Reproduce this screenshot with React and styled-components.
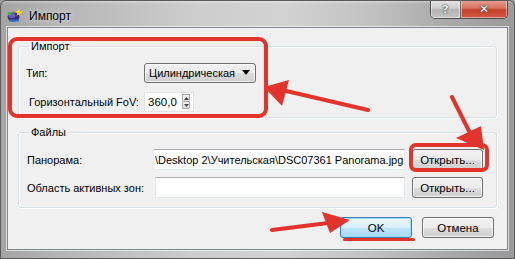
import React from "react";
import styled, { createGlobalStyle } from "styled-components";

const Global = createGlobalStyle`
  html, body { margin: 0; padding: 0; background: #9c9c9c; }
  body { font-family: "Liberation Sans", Arial, sans-serif; }
  * { box-sizing: border-box; }
`;

const Window = styled.div`
  position: relative;
  width: 515px;
  height: 259px;
  display: flex;
  flex-direction: column;
  background:
    linear-gradient(180deg, rgba(255,255,255,0.35) 0px, rgba(255,255,255,0) 3px),
    linear-gradient(90deg, #a4a4a4 0%, #b6b6b6 12%, #cdcdcd 38%, #d2d2d2 55%, #c2c2c2 72%, #a8a8a8 88%, #9a9a9a 100%);
  border: 1px solid #5a5a5a;
  border-radius: 6px 6px 0 0;
  overflow: hidden;
`;

const TitleBar = styled.div`
  height: 26px;
  display: flex;
  align-items: flex-start;
  flex-shrink: 0;
`;

const AppIcon = styled.svg`
  width: 16px;
  height: 16px;
  margin: 6px 0 0 6px;
`;

const Title = styled.div`
  font-size: 12px;
  color: #000;
  margin: 8px 0 0 6px;
  flex: 1;
  text-shadow: 0 0 6px rgba(255,255,255,0.9);
`;

const Caption = styled.div`
  display: flex;
  margin-right: 6px;
  margin-top: -1px;
  border: 1px solid #4f4f4f;
  border-top: none;
  border-radius: 0 0 5px 5px;
  overflow: hidden;
  height: 19px;
`;

const CapButton = styled.div`
  width: ${p => p.$w}px;
  height: 100%;
  display: flex;
  align-items: center;
  justify-content: center;
  font-family: "DejaVu Sans", sans-serif;
  font-weight: bold;
  font-size: ${p => p.$close ? 12 : 11}px;
  color: #fff;
  text-shadow: 0 0 2px #333, 0 0 1px #333;
  background: ${p => p.$close
    ? "linear-gradient(180deg, #e8a397 0%, #d8705e 45%, #c7402a 55%, #d15a45 100%)"
    : "linear-gradient(180deg, #e6e6e6 0%, #cdcdcd 45%, #b3b3b3 55%, #c4c4c4 100%)"};
  border-left: ${p => p.$close ? "1px solid #6a6a6a" : "none"};
  box-shadow: inset 0 0 0 1px rgba(255,255,255,0.45);
`;

const Client = styled.div`
  flex: 1;
  margin: 0 6px 8px 6px;
  border: 1px solid #828790;
  background: #f0f0f0;
  padding: 12px 10px 11px 10px;
  display: flex;
  flex-direction: column;
  font-size: 11px;
  color: #000;
  box-shadow: 0 0 0 1px rgba(255,255,255,0.6);
`;

const Group = styled.fieldset`
  margin: 0 0 ${p => p.$mb}px 0;
  padding: ${p => p.$pt}px 8px ${p => p.$pb}px 6px;
  border: 1px solid #d5dfe5;
  border-radius: 3px;
  box-shadow: inset 1px 1px 0 #fff, 1px 1px 0 #fff;
  min-width: 0;
`;

const Legend = styled.legend`
  padding: 0 2px;
  margin-left: 4px;
  font-size: 11px;
  line-height: 13px;
  color: #000;
`;

const Row = styled.div`
  display: flex;
  align-items: center;
  height: 21px;
  margin-bottom: ${p => p.$mb || 0}px;
`;

const Label = styled.div`
  width: ${p => p.$w}px;
  padding-left: ${p => p.$indent || 0}px;
  flex-shrink: 0;
  white-space: nowrap;
`;

const Combo = styled.div`
  width: 112px;
  height: 20px;
  border: 1px solid #707070;
  border-radius: 3px;
  background: linear-gradient(180deg, #f2f2f2 0%, #ebebeb 50%, #dddddd 51%, #cfcfcf 100%);
  box-shadow: inset 0 0 0 1px rgba(255,255,255,0.7);
  display: flex;
  align-items: center;
  padding-left: 4px;
  font-size: 11px;
  justify-content: space-between;
`;

const ComboArrow = styled.svg`
  width: 8px;
  height: 5px;
  margin-right: 5px;
`;

const Spin = styled.div`
  width: 50px;
  height: 20px;
  background: #fff;
  border: 1px solid #e3e3e3;
  display: flex;
  align-items: center;
  padding-left: 3px;
  font-size: 11.5px;
  justify-content: space-between;
`;

const SpinButtons = styled.div`
  display: flex;
  flex-direction: column;
  width: 8px;
  height: 15px;
  margin-right: 3px;
`;

const SpinBtn = styled.div`
  flex: 1;
  border: 1px solid #a7a7a7;
  border-radius: 1px;
  background: linear-gradient(180deg, #f6f6f6, #dedede);
  display: flex;
  align-items: center;
  justify-content: center;
  &:first-child { border-bottom: none; }
`;

const Input = styled.div`
  width: ${p => p.$w}px;
  height: 21px;
  background: #fff;
  border: 1px solid #e3e9ef;
  border-top-color: #abadb3;
  display: flex;
  align-items: center;
  padding-left: 1px;
  font-size: 11px;
  overflow: hidden;
  white-space: nowrap;
  margin-right: 7px;
`;

const Button = styled.div`
  width: ${p => p.$w}px;
  height: ${p => p.$h || 21}px;
  border: 1px solid ${p => p.$default ? "#3c7fb1" : "#707070"};
  border-radius: 3px;
  background: ${p => p.$default
    ? "linear-gradient(180deg, #eaf6fd 0%, #d9f0fc 50%, #bee6fd 51%, #a7d9f5 100%)"
    : "linear-gradient(180deg, #f2f2f2 0%, #ebebeb 50%, #dddddd 51%, #cfcfcf 100%)"};
  box-shadow: inset 0 0 0 1px ${p => p.$default ? "rgba(150,220,250,0.9)" : "rgba(255,255,255,0.75)"};
  display: flex;
  align-items: center;
  justify-content: center;
  font-size: 11.5px;
  flex-shrink: 0;
`;

const ButtonRow = styled.div`
  display: flex;
  justify-content: flex-end;
  gap: 10px;
  margin-top: auto;
  padding-right: 3px;
`;

const Overlay = styled.svg`
  position: absolute;
  left: -1px;
  top: -1px;
  width: 515px;
  height: 259px;
  pointer-events: none;
`;

const RED = "#e2342c";

export default function App() {
  return (
    <>
      <Global />
      <Window>
        <TitleBar>
          <AppIcon viewBox="0 0 16 16">
            <ellipse cx="6.5" cy="10" rx="6" ry="4.5" fill="#3b2f7a" />
            <ellipse cx="5" cy="8.5" rx="3.5" ry="2.5" fill="#6b5fc0" />
            <rect x="2" y="12.5" width="10" height="2" fill="#2a6fcf" />
            <path d="M12 1 L13 4 L16 4.5 L13.5 6 L14 9 L12 7 L9.5 9 L10.5 6 L8 4.5 L11 4 Z" fill="#f4d21c" />
            <rect x="1" y="5" width="3" height="3" fill="#4caf50" />
          </AppIcon>
          <Title>Импорт</Title>
          <Caption>
            <CapButton $w={29}>?</CapButton>
            <CapButton $w={47} $close>✕</CapButton>
          </Caption>
        </TitleBar>
        <Client>
          <Group $pt={9} $pb={5} $mb={8}>
            <Legend>Импорт</Legend>
            <Row $mb={8}>
              <Label $w={119} $indent={1}>Тип:</Label>
              <Combo>
                Цилиндрическая
                <ComboArrow viewBox="0 0 8 5"><path d="M0 0 H8 L4 5 Z" fill="#000" /></ComboArrow>
              </Combo>
            </Row>
            <Row>
              <Label $w={119} $indent={4}>Горизонтальный FoV:</Label>
              <Spin>
                360,0
                <SpinButtons>
                  <SpinBtn><svg width="5" height="3" viewBox="0 0 5 3"><path d="M0 3 L2.5 0 L5 3Z" fill="#444" /></svg></SpinBtn>
                  <SpinBtn><svg width="5" height="3" viewBox="0 0 5 3"><path d="M0 0 L2.5 3 L5 0Z" fill="#444" /></svg></SpinBtn>
                </SpinButtons>
              </Spin>
            </Row>
          </Group>
          <Group $pt={10} $pb={9} $mb={0}>
            <Legend>Файлы</Legend>
            <Row $mb={7}>
              <Label $w={128} $indent={2}>Панорама:</Label>
              <Input $w={252}>\Desktop 2\Учительская\DSC07361 Panorama.jpg</Input>
              <Button $w={71}>Открыть...</Button>
            </Row>
            <Row>
              <Label $w={130} $indent={2}>Область активных зон:</Label>
              <Input $w={250} />
              <Button $w={71}>Открыть...</Button>
            </Row>
          </Group>
          <ButtonRow>
            <Button $w={72} $default>OK</Button>
            <Button $w={72}>Отмена</Button>
          </ButtonRow>
        </Client>
        <Overlay viewBox="0 0 515 259">
          <rect x="10" y="39" width="256" height="77" rx="7" fill="none" stroke={RED} strokeWidth="4" />
          <rect x="411" y="145" width="76" height="25" rx="5" fill="none" stroke={RED} strokeWidth="4" />
          <rect x="343" y="238" width="72" height="3" rx="1.5" fill={RED} />
          <line x1="368" y1="110" x2="282" y2="90" stroke={RED} strokeWidth="4" strokeLinecap="round" />
          <polygon points="264,87 289,80 282,106" fill={RED} />
          <line x1="452" y1="97" x2="472" y2="137" stroke={RED} strokeWidth="4" strokeLinecap="round" />
          <polygon points="484,150 456,138 481,126" fill={RED} />
          <line x1="272" y1="230" x2="328" y2="223" stroke={RED} strokeWidth="4" strokeLinecap="round" />
          <polygon points="350,220 322,212 330,233" fill={RED} />
        </Overlay>
      </Window>
    </>
  );
}
